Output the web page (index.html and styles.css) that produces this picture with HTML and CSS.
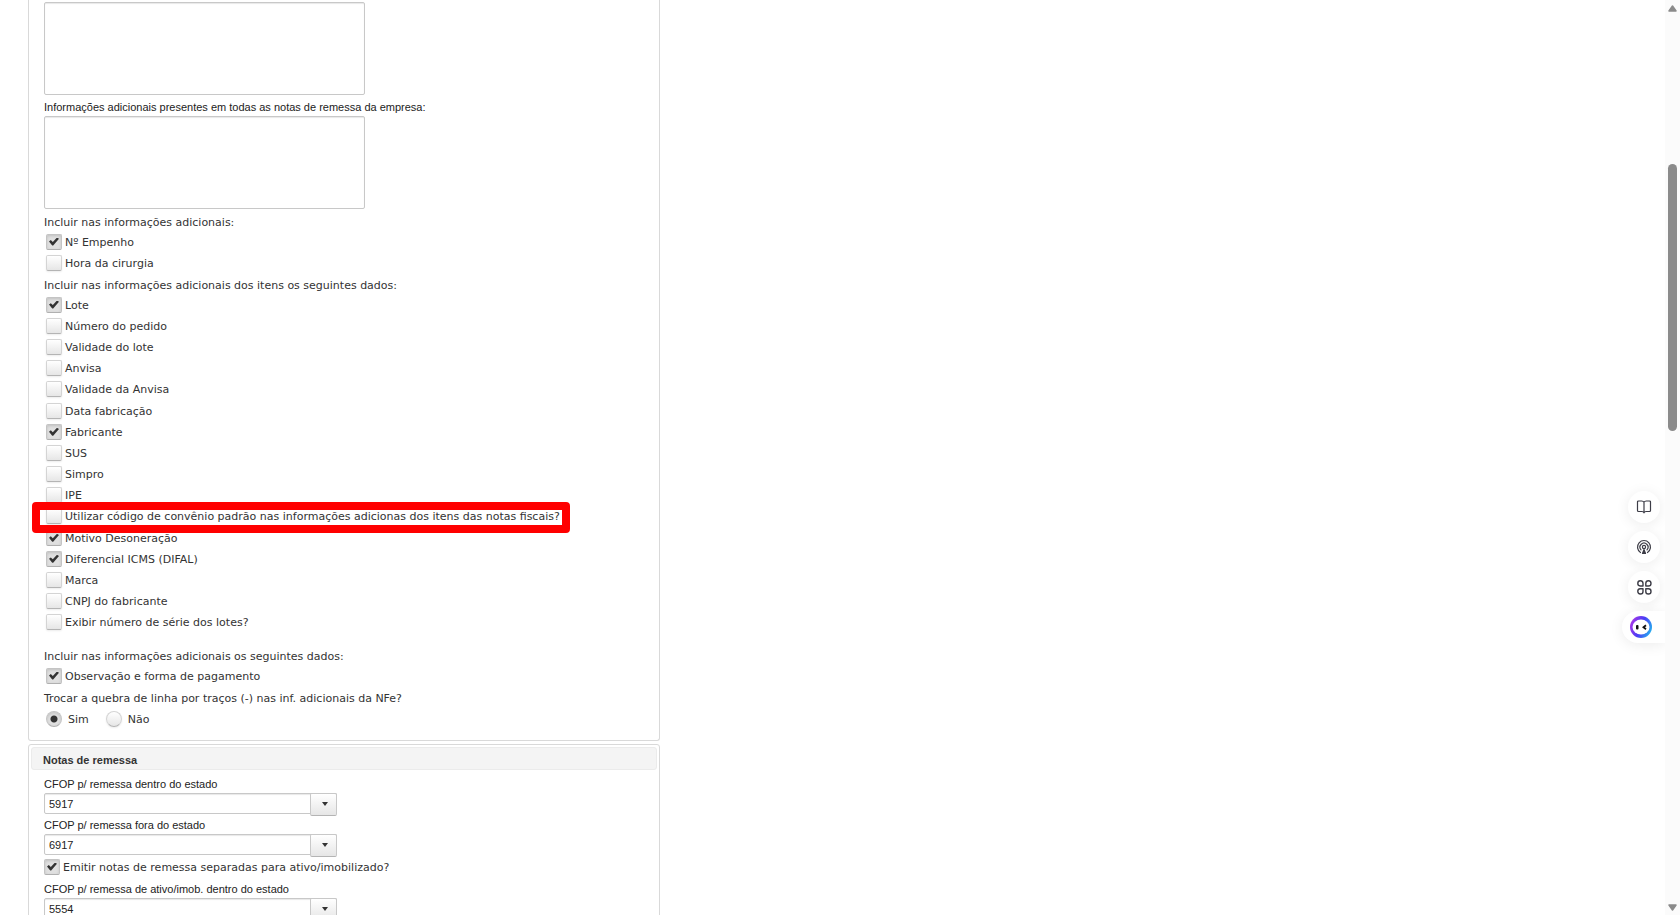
FILE: index.html
```
<!DOCTYPE html>
<html lang="pt-BR">
<head>
    <meta charset="UTF-8">
    <meta name="viewport" content="width=device-width, initial-scale=1.0">
    <title>Configurações da empresa</title>
    <link rel="stylesheet" href="styles.css">
</head>
<body>
    <main class="content">
        <section class="panel panel-info">
            <textarea class="texto" aria-label="Informações adicionais"></textarea>
            <label class="legenda-campo" for="infoRemessa">Informações adicionais presentes em todas as notas de remessa da empresa:</label>
            <textarea class="texto" id="infoRemessa"></textarea>

            <p class="legenda">Incluir nas informações adicionais:</p>
            <label class="opcao"><input type="checkbox" checked>Nº Empenho</label>
            <label class="opcao"><input type="checkbox">Hora da cirurgia</label>

            <p class="legenda">Incluir nas informações adicionais dos itens os seguintes dados:</p>
            <div class="itens">
                <label class="opcao"><input type="checkbox" checked>Lote</label>
                <label class="opcao"><input type="checkbox">Número do pedido</label>
                <label class="opcao"><input type="checkbox">Validade do lote</label>
                <label class="opcao"><input type="checkbox">Anvisa</label>
                <label class="opcao"><input type="checkbox">Validade da Anvisa</label>
                <label class="opcao"><input type="checkbox">Data fabricação</label>
                <label class="opcao"><input type="checkbox" checked>Fabricante</label>
                <label class="opcao"><input type="checkbox">SUS</label>
                <label class="opcao"><input type="checkbox">Simpro</label>
                <label class="opcao"><input type="checkbox">IPE</label>
                <label class="opcao destaque"><input type="checkbox">Utilizar código de convênio padrão nas informações adicionas dos itens das notas fiscais?</label>
                <label class="opcao"><input type="checkbox" checked>Motivo Desoneração</label>
                <label class="opcao"><input type="checkbox" checked>Diferencial ICMS (DIFAL)</label>
                <label class="opcao"><input type="checkbox">Marca</label>
                <label class="opcao"><input type="checkbox">CNPJ do fabricante</label>
                <label class="opcao"><input type="checkbox">Exibir número de série dos lotes?</label>
            </div>

            <p class="legenda legenda-separada">Incluir nas informações adicionais os seguintes dados:</p>
            <label class="opcao"><input type="checkbox" checked>Observação e forma de pagamento</label>

            <p class="legenda">Trocar a quebra de linha por traços (-) nas inf. adicionais da NFe?</p>
            <div class="radios">
                <label class="opcao"><input type="radio" name="quebra" checked>Sim</label>
                <label class="opcao"><input type="radio" name="quebra">Não</label>
            </div>
        </section>

        <section class="panel panel-remessa">
            <h2 class="titulo">Notas de remessa</h2>
            <div class="campos">
                <label class="legenda-campo" for="cfopDentro">CFOP p/ remessa dentro do estado</label>
                <div class="combo">
                    <select id="cfopDentro"><option>5917</option></select>
                </div>
                <label class="legenda-campo" for="cfopFora">CFOP p/ remessa fora do estado</label>
                <div class="combo">
                    <select id="cfopFora"><option>6917</option></select>
                </div>
                <label class="opcao opcao-larga"><input type="checkbox" checked>Emitir notas de remessa separadas para ativo/imobilizado?</label>
                <label class="legenda-campo" for="cfopAtivo">CFOP p/ remessa de ativo/imob. dentro do estado</label>
                <div class="combo">
                    <select id="cfopAtivo"><option>5554</option></select>
                </div>
            </div>
        </section>
    </main>

    <!-- Botões flutuantes da extensão -->
    <aside class="flutuantes">
        <button type="button" class="bolha" aria-label="Leitura">
            <svg width="16" height="16" viewBox="0 0 16 16" fill="none" stroke="#3d3d47" stroke-width="1.2" stroke-linejoin="round" stroke-linecap="round">
                <path d="M8 3.2C7.5 2.3 6.7 2 5.7 2H2.5Q1.5 2 1.5 3V11.5Q1.5 12.5 2.5 12.5H6Q7.5 12.5 8 13.8Q8.5 12.5 10 12.5H13.5Q14.5 12.5 14.5 11.5V3Q14.5 2 13.5 2H10.3C9.3 2 8.5 2.3 8 3.2V13.8"/>
            </svg>
        </button>
        <button type="button" class="bolha" aria-label="Podcast">
            <svg width="16" height="16" viewBox="0 0 16 16" fill="none" stroke="#3d3d47" stroke-width="1.2" stroke-linecap="round">
                <path d="M4.5 13.5A6.5 6.5 0 1 1 11.5 13.5M5 10.8A4 4 0 1 1 11 10.8"/>
                <circle cx="8" cy="8" r="1.6"/>
                <path d="M8 10.5L6.5 14.5H9.5Z" fill="#3d3d47" stroke-linejoin="round"/>
            </svg>
        </button>
        <button type="button" class="bolha" aria-label="Aplicativos">
            <svg width="16" height="16" viewBox="0 0 16 16" fill="none" stroke="#3d3d47" stroke-width="1.4" stroke-linejoin="round">
                <path d="M7 7H4.2A2.6 2.6 0 1 1 7 4.2ZM9.8 7V4.2A2.6 2.6 0 1 1 12.4 7ZM7 9.8V12.4A2.6 2.6 0 1 1 4.2 9.8ZM9.8 9.8H12.4A2.6 2.6 0 1 1 9.8 12.4Z"/>
            </svg>
        </button>
        <button type="button" class="bolha bolha-assistente" aria-label="Assistente">
            <svg width="22" height="22" viewBox="0 0 22 22">
                <defs>
                    <linearGradient id="anel" x1="0" y1="0.3" x2="1" y2="0.7">
                        <stop offset="0" stop-color="#a936e8"/>
                        <stop offset="0.5" stop-color="#4a3df5"/>
                        <stop offset="1" stop-color="#25b4ee"/>
                    </linearGradient>
                </defs>
                <circle cx="11" cy="11" r="11" fill="url(#anel)"/>
                <ellipse cx="11" cy="11" rx="8.5" ry="7.5" fill="#fff"/>
                <rect x="6" y="9" width="2.5" height="4.5" rx="1" fill="#111"/>
                <path d="M16 9.3L13.5 11.2L16 13.2" fill="none" stroke="#111" stroke-width="1.8"/>
            </svg>
        </button>
    </aside>

    <!-- Barra de rolagem -->
    <div class="rolagem">
        <svg width="9" height="7" viewBox="0 0 9 7"><path d="M4.5 1L8 6H1Z" fill="#8b8b8b" stroke="#8b8b8b" stroke-width="1.5" stroke-linejoin="round"/></svg>
        <div class="trilho"><div class="polegar"></div></div>
        <svg width="9" height="7" viewBox="0 0 9 7"><path d="M4.5 6L8 1H1Z" fill="#8b8b8b" stroke="#8b8b8b" stroke-width="1.5" stroke-linejoin="round"/></svg>
    </div>
</body>
</html>
```
FILE: styles.css
```
* {
    box-sizing: border-box;
}
body {
    margin: 0;
    height: 100vh;
    overflow: hidden;
    background-color: #fff;
    color: #333;
    font-family: Verdana, "DejaVu Sans", sans-serif;
    font-size: 11px;
    line-height: 16px;
}
.content {
    padding-left: 28px;
    padding-right: 28px;
}
.panel {
    display: flex;
    flex-direction: column;
    align-items: flex-start;
    max-width: 632px;
    border: 1px solid #d9d9d9;
    border-radius: 3px;
}
.panel-info {
    padding: 2px 15px 10px;
    border-top: none;
    border-top-left-radius: 0;
    border-top-right-radius: 0;
    margin-bottom: 3px;
}
.panel-remessa {
    padding: 2px;
}
.texto {
    width: 321px;
    height: 93px;
    margin-bottom: 2px;
    border: 1px solid #c8c8c8;
    border-radius: 2px;
    resize: none;
    box-shadow: inset 0 1px 1px #e8e8e8;
}
.legenda-campo {
    margin: 2px 0 1px;
    color: #222;
    font-family: Arial, "Liberation Sans", sans-serif;
}
.legenda {
    margin: 4px 0 1px;
}
.legenda-separada {
    margin-top: 15px;
}
.opcao {
    display: flex;
    align-items: center;
    gap: 3px;
    height: 21px;
    padding-left: 2px;
}
.opcao input {
    appearance: none;
    flex: none;
    width: 16px;
    height: 16px;
    margin: 0 0 2px;
    border: 1px solid #d4d4d4;
    border-bottom-color: #b4b4b4;
    border-radius: 2px;
    background: linear-gradient(#fff, #e6e6e6);
    box-shadow: 0 1px 2px rgba(0, 0, 0, 0.08);
}
.opcao input:checked {
    border-color: #c4c4c4;
    border-bottom-color: #b0b0b0;
    background: #e0e0e0;
    box-shadow: inset 0 1px 3px #c0c0c0;
}
.opcao input[type="checkbox"]:checked::before {
    content: "";
    display: block;
    width: 10px;
    height: 8px;
    margin: 3px 2px;
    background-color: #333;
    clip-path: polygon(0 50%, 18% 32%, 38% 56%, 80% 0, 100% 16%, 42% 100%, 32% 100%);
}
.opcao input[type="radio"] {
    border-radius: 50%;
}
.opcao input[type="radio"]:checked {
    background: radial-gradient(circle, #333 3px, #e0e0e0 4px);
}

/* Lista de itens, linhas de mesma altura */
.itens {
    display: grid;
    grid-auto-rows: 1fr;
    justify-items: start;
    height: 339px;
}
.itens .opcao {
    height: auto;
}

/* Linha destacada em vermelho */
.destaque {
    position: relative;
}
.destaque::after {
    content: "";
    position: absolute;
    inset: -5px -10px -5px -12px;
    border: 8px solid #f00;
    border-radius: 4px;
}
.radios {
    display: flex;
    gap: 15px;
    margin-top: 1px;
}
.radios .opcao {
    gap: 6px;
}
.titulo {
    width: 100%;
    margin: 0 0 3px;
    padding: 4px 11px 1px;
    border: 1px solid #ebebeb;
    border-radius: 3px;
    background-color: #f4f4f4;
    font-family: Arial, "Liberation Sans", sans-serif;
    font-size: 11px;
}
.campos {
    display: flex;
    flex-direction: column;
    align-items: flex-start;
    padding: 0 13px;
}
.campos .legenda-campo {
    margin-top: 3px;
}
.combo {
    position: relative;
    width: 293px;
    height: 21px;
}
.combo select {
    appearance: none;
    width: 100%;
    height: 100%;
    padding: 0 4px;
    border: 1px solid #c8c8c8;
    border-radius: 2px;
    background-color: #fff;
    box-shadow: inset 0 1px 1px #e8e8e8;
    color: #222;
    font-family: Arial, "Liberation Sans", sans-serif;
    font-size: 11px;
}
.combo::before {
    content: "";
    position: absolute;
    top: 0;
    right: 0;
    width: 25px;
    height: 21px;
    border: 1px solid #c8c8c8;
    border-bottom-color: #b4b4b4;
    border-radius: 2px;
    background: linear-gradient(#fff, #e6e6e6);
    pointer-events: none;
}
.combo::after {
    content: "";
    position: absolute;
    top: 9px;
    right: 9px;
    border: 3px solid transparent;
    border-top: 4px solid #333;
    border-bottom: none;
    pointer-events: none;
}
.opcao-larga {
    margin-top: 2px;
    padding-left: 0;
}

.flutuantes {
    position: fixed;
    top: 481px;
    right: 15px;
    display: flex;
    flex-direction: column;
    align-items: flex-end;
    gap: 8px;
    width: 72px;
    padding: 10px 0 20px;
    overflow: hidden;
}
.bolha {
    display: flex;
    align-items: center;
    justify-content: center;
    width: 32px;
    height: 32px;
    margin-right: 5px;
    padding: 0;
    border: none;
    border-radius: 50%;
    background-color: #fff;
    box-shadow: 0 2px 14px rgba(0, 0, 0, 0.08);
    cursor: pointer;
}
.bolha-assistente {
    justify-content: flex-start;
    width: 43px;
    margin-right: 0;
    padding-left: 8px;
    border-radius: 16px 0 0 16px;
}
.rolagem {
    position: fixed;
    top: 0;
    right: 0;
    bottom: 0;
    display: flex;
    flex-direction: column;
    align-items: center;
    width: 15px;
    padding: 5px 0 4px;
    background-color: #fbfbfb;
}
.trilho {
    flex: 1;
    padding-top: 152px;
}
.polegar {
    width: 9px;
    height: 267px;
    border-radius: 5px;
    background-color: #8b8b8b;
}
```
